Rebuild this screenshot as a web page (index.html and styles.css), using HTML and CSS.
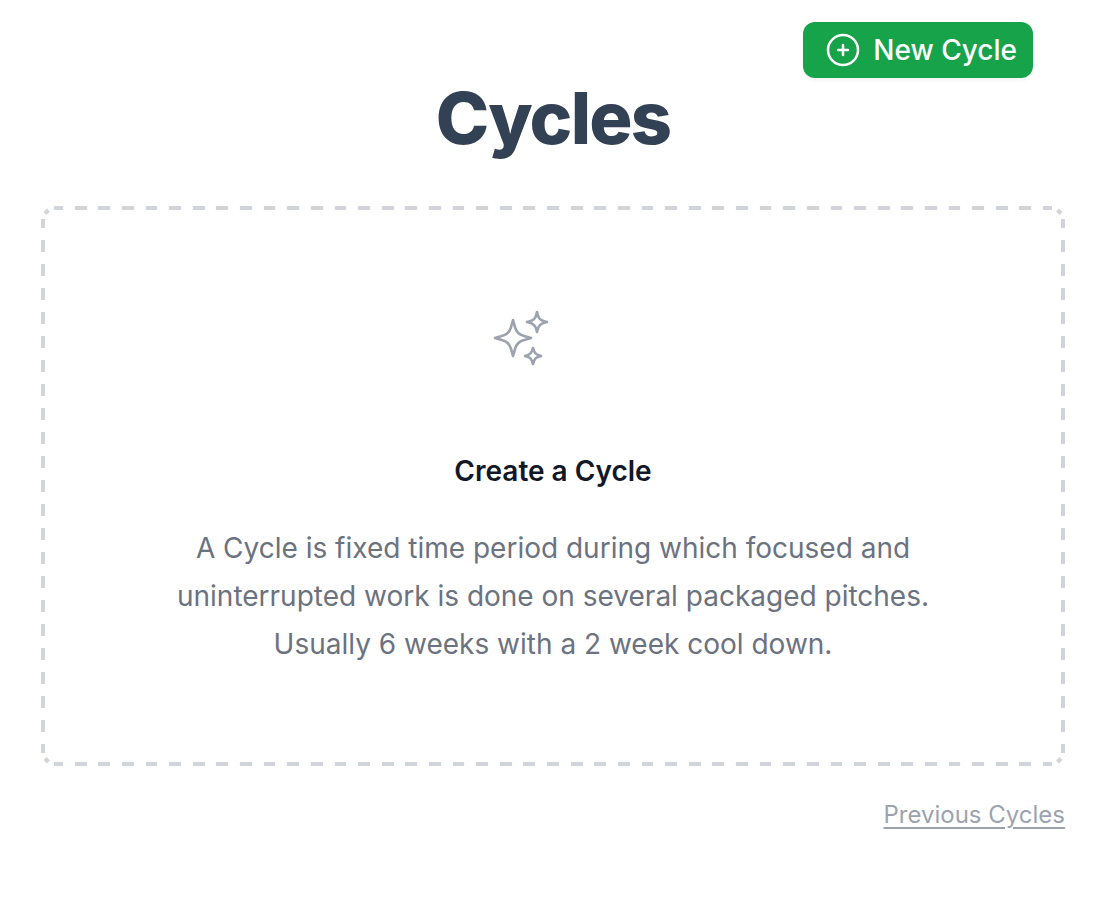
FILE: index.html
```
<!DOCTYPE html>
<html lang="en">

<head>
    <meta charset="UTF-8">
    <meta name="viewport" content="width=device-width, initial-scale=1.0">
    <title>Cycles</title>
    <link rel="stylesheet" href="styles.css">
</head>

<body>

    <div class="toolbar">
        <button type="button" class="newButton">
            <svg class="plusIcon" viewBox="0 0 24 24" aria-hidden="true">
                <path d="M12 9v6m3-3H9m12 0a9 9 0 11-18 0 9 9 0 0118 0z" />
            </svg>
            New Cycle
        </button>
    </div>

    <h1>Cycles</h1>

    <main class="emptyState">
        <div class="iconWrap">
            <svg class="sparkles" viewBox="0 0 24 24" aria-hidden="true">
                <path d="M9.813 15.904L9 18.75l-.813-2.846a4.5 4.5 0 00-3.09-3.09L2.25 12l2.846-.813a4.5 4.5 0 003.09-3.09L9 5.25l.813 2.846a4.5 4.5 0 003.09 3.09L15.75 12l-2.846.813a4.5 4.5 0 00-3.09 3.09z" />
                <path d="M18.259 8.715L18 9.75l-.259-1.035a3.375 3.375 0 00-2.455-2.456L14.25 6l1.036-.259a3.375 3.375 0 002.455-2.456L18 2.25l.259 1.035a3.375 3.375 0 002.456 2.456L21.75 6l-1.035.259a3.375 3.375 0 00-2.456 2.456z" />
                <path d="M16.894 20.567L16.5 21.75l-.394-1.183a2.25 2.25 0 00-1.423-1.423L13.5 18.75l1.183-.394a2.25 2.25 0 001.423-1.423l.394-1.183.394 1.183a2.25 2.25 0 001.423 1.423l1.183.394-1.183.394a2.25 2.25 0 00-1.423 1.423z" />
            </svg>
        </div>
        <h2>Create a Cycle</h2>
        <p>A Cycle is fixed time period during which focused and uninterrupted work is done on several packaged pitches. Usually 6 weeks with a 2 week cool down.</p>
    </main>

    <div class="footer">
        <a href="#previous">Previous Cycles</a>
    </div>

</body>

</html>
```

FILE: styles.css
```
* {
    box-sizing: border-box;
}

body {
    margin: 0;
    padding: 22px 35px 40px 41px;
    font-family: Inter, "Liberation Sans", sans-serif;
    background-color: #fff;
}

svg {
    display: block;
    fill: none;
    stroke: currentColor;
    stroke-linecap: round;
    stroke-linejoin: round;
}

.toolbar {
    display: flex;
    justify-content: flex-end;
    padding-right: 32px;
}

.newButton {
    display: flex;
    align-items: center;
    gap: 10px;
    padding: 8px 16px 8px 20px;
    font-family: inherit;
    font-size: 28px;
    font-weight: 500;
    line-height: 40px;
    color: #fff;
    background-color: #16a34a;
    border: none;
    border-radius: 12px;
    box-shadow: 0 2px 4px rgba(0, 0, 0, 0.05);
    cursor: pointer;
}

.newButton:hover {
    background-color: #15803d;
}

.plusIcon {
    width: 40px;
    height: 40px;
    stroke-width: 1.5;
}

h1 {
    margin: 0 0 48px;
    font-size: 72px;
    font-weight: 800;
    line-height: 80px;
    letter-spacing: -0.025em;
    text-align: center;
    color: #334155;
}

/* long dashes: the edges repeat a tile that holds two dashes */
.emptyState {
    display: flex;
    flex-direction: column;
    align-items: center;
    padding: 96px 94px 94px;
    text-align: center;
    border: 4px solid transparent;
    border-radius: 16px;
    border-image-source: url("data:image/svg+xml,%3Csvg xmlns='http://www.w3.org/2000/svg' width='79' height='80' viewBox='0 0 79 80'%3E%3Cg fill='none' stroke='%23d1d5db' stroke-width='4'%3E%3Cpath d='M13 2h9M33.5 2h12M57 2h9M13 78h9M33.5 78h12M57 78h9M2 13v9M2 34v12M2 58v9M77 13v9M77 34v12M77 58v9M4 7.5L7.5 4M71.5 4L75 7.5M4 72.5L7.5 76M71.5 76L75 72.5'/%3E%3C/g%3E%3C/svg%3E");
    border-image-slice: 16;
    border-image-width: 16px;
    border-image-repeat: round;
}

.iconWrap {
    width: 128px;
    height: 128px;
    color: #9ca3af;
}

.sparkles {
    width: 64px;
    height: 64px;
    stroke-width: 1;
}

h2 {
    margin: 16px 0 32px;
    font-size: 28px;
    font-weight: 600;
    line-height: 42px;
    color: #111827;
}

p {
    max-width: 768px;
    margin: 0;
    font-size: 28px;
    line-height: 48px;
    color: #6b7280;
}

.footer {
    margin-top: 32px;
    font-size: 24px;
    line-height: 34px;
    text-align: right;
}

.footer a {
    color: #9ca3af;
    text-decoration-thickness: 2px;
    text-underline-offset: 4px;
}
```
